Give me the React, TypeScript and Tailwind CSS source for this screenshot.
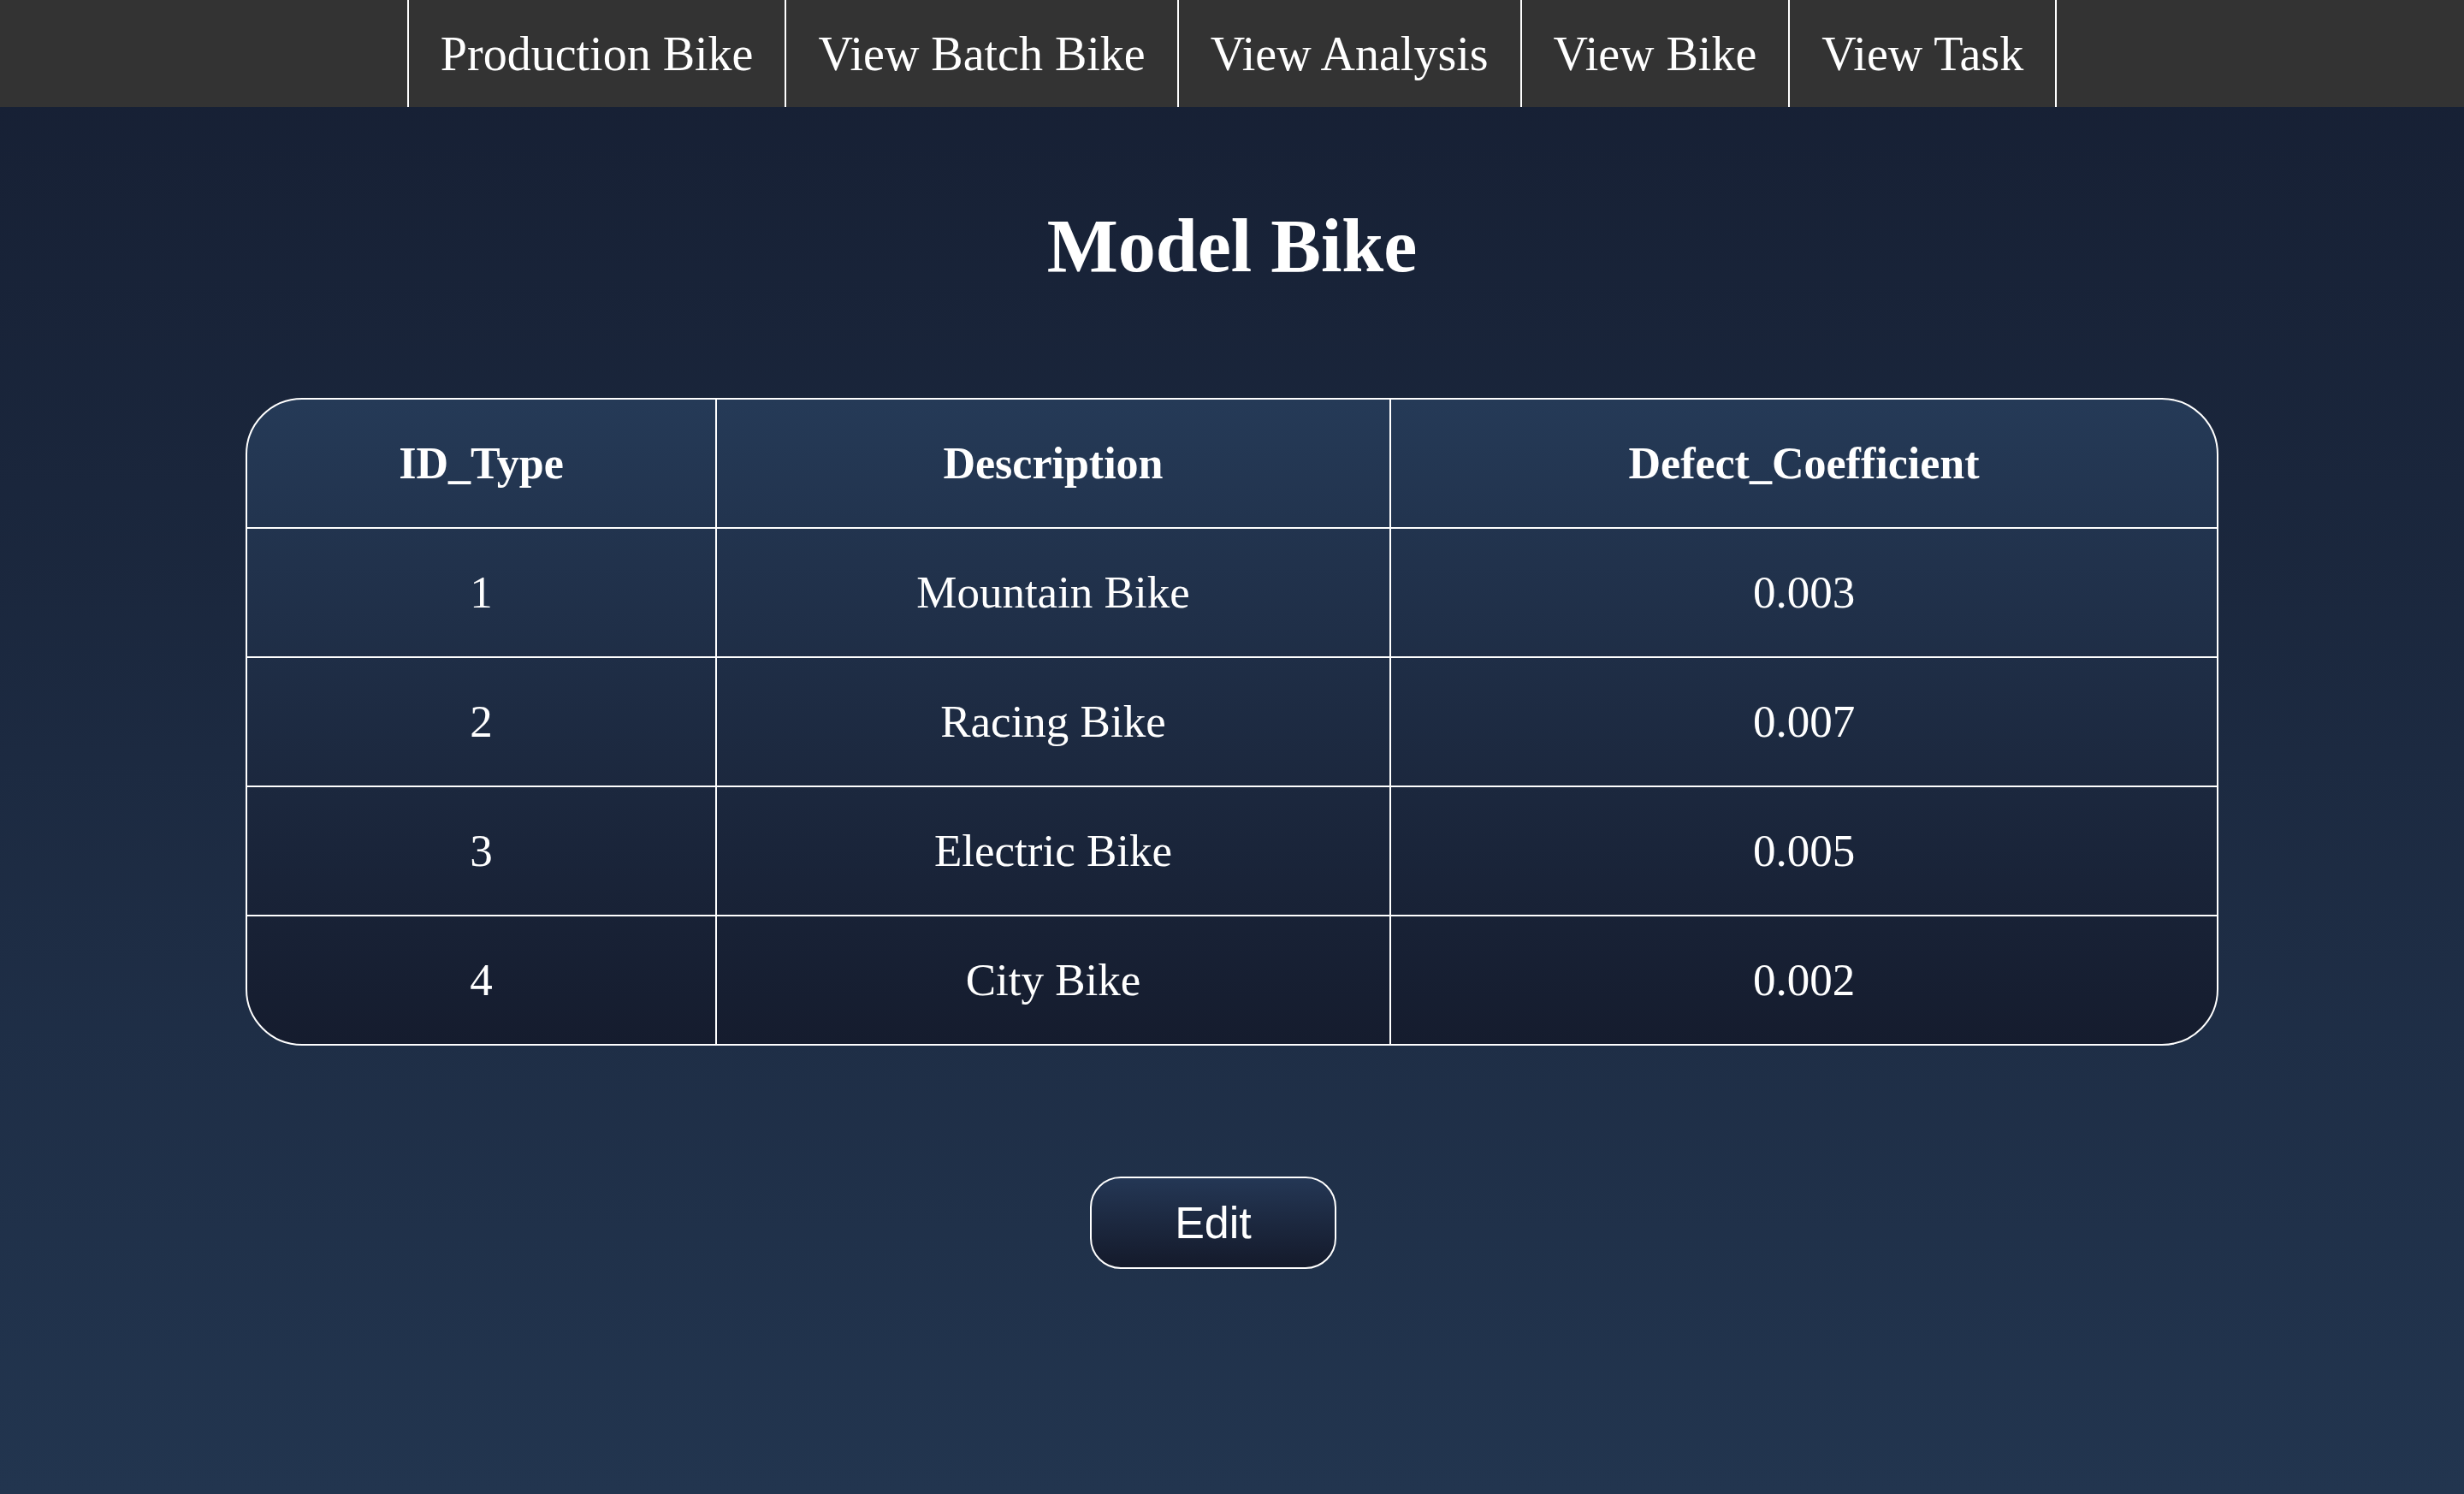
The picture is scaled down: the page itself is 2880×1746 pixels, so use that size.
import React from "react";

const NAV_ITEMS = [
  "Production Bike",
  "View Batch Bike",
  "View Analysis",
  "View Bike",
  "View Task",
];

const ROWS = [
  { id: "1", description: "Mountain Bike", coefficient: "0.003" },
  { id: "2", description: "Racing Bike", coefficient: "0.007" },
  { id: "3", description: "Electric Bike", coefficient: "0.005" },
  { id: "4", description: "City Bike", coefficient: "0.002" },
];

const serif = { fontFamily: '"Liberation Serif", "Times New Roman", serif' };

export default function App() {
  return (
    <div
      className="min-h-[1746px] w-full flex flex-col bg-gradient-to-b from-[#161f33] to-[#22354f] text-white"
      style={serif}
    >
      {/* Top navigation */}
      <nav className="h-[125px] bg-[#333333] flex justify-center">
        <ul className="flex h-full">
          {NAV_ITEMS.map((item, i) => (
            <li
              key={item}
              className={`h-full flex items-center px-[37px] border-l-2 border-white text-[56px] leading-none ${
                i === NAV_ITEMS.length - 1 ? "border-r-2" : ""
              }`}
            >
              {item}
            </li>
          ))}
        </ul>
      </nav>

      {/* Title */}
      <h1 className="mt-[113px] text-center text-[88px] leading-[100px] font-bold">
        Model Bike
      </h1>

      {/* Table */}
      <div className="mt-[127px] mx-auto w-[2306px] rounded-[66px] border-2 border-white overflow-hidden bg-gradient-to-b from-[#253a57] to-[#151c2e]">
        <div className="grid grid-cols-[549px_788px_965px] h-[151px] border-b-2 border-white text-[52px] font-bold">
          <div className="flex items-center justify-center border-r-2 border-white">
            ID_Type
          </div>
          <div className="flex items-center justify-center border-r-2 border-white">
            Description
          </div>
          <div className="flex items-center justify-center">Defect_Coefficient</div>
        </div>
        {ROWS.map((row, i) => (
          <div
            key={row.id}
            className={`grid grid-cols-[549px_788px_965px] text-[53px] ${
              i === ROWS.length - 1 ? "h-[149px]" : "h-[151px] border-b-2 border-white"
            }`}
          >
            <div className="flex items-center justify-center border-r-2 border-white">
              {row.id}
            </div>
            <div className="flex items-center justify-center border-r-2 border-white">
              {row.description}
            </div>
            <div className="flex items-center justify-center">{row.coefficient}</div>
          </div>
        ))}
      </div>

      {/* Edit button */}
      <div className="mt-[153px] flex justify-center">
        <button
          className="mr-[44px] w-[288px] h-[108px] rounded-[36px] border-2 border-white bg-gradient-to-b from-[#243755] to-[#141a2b] text-white text-[52px] leading-none"
          style={{ fontFamily: '"Liberation Sans", Arial, sans-serif' }}
        >
          Edit
        </button>
      </div>
    </div>
  );
}
